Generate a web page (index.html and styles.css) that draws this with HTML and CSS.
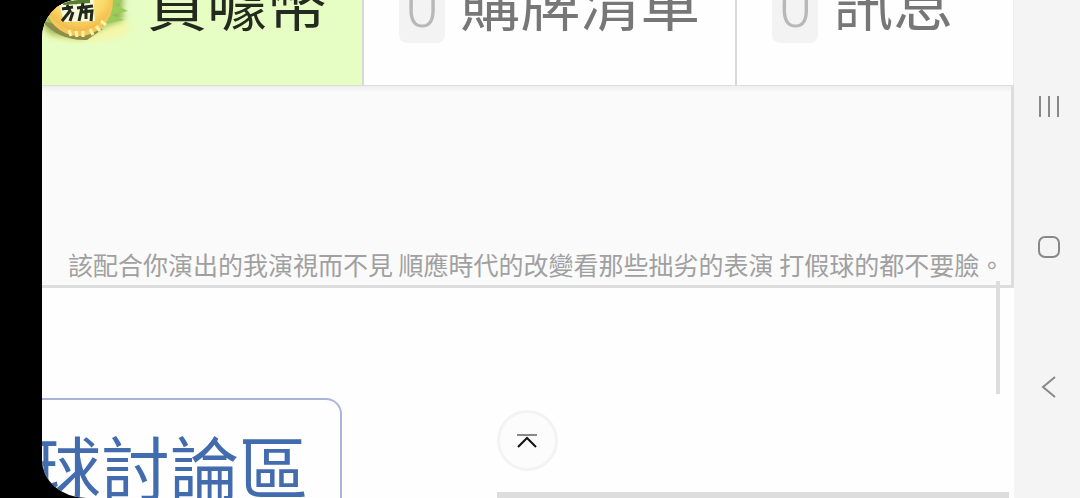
FILE: index.html
```
<!DOCTYPE html>
<html lang="zh-Hant">
<head>
    <meta charset="UTF-8">
    <meta name="viewport" content="width=device-width, initial-scale=1.0">
    <title>討論區</title>
    <link rel="stylesheet" href="styles.css">
</head>
<body>
    <div class="screen">
        <main class="page">
            <nav class="tabs">
                <a class="tab tab-active" href="#coins">
                    <svg class="coin" viewBox="0 0 96 100" aria-hidden="true">
                        <defs>
                            <filter id="soft"><feGaussianBlur stdDeviation="3"/></filter>
                            <radialGradient id="gold" cx="50%" cy="40%" r="60%">
                                <stop offset="0" stop-color="#fff3a0"/>
                                <stop offset="0.7" stop-color="#f9d968"/>
                                <stop offset="1" stop-color="#f2b94a"/>
                            </radialGradient>
                        </defs>
                        <ellipse cx="44" cy="84" rx="44" ry="15" fill="#f4f7a8" filter="url(#soft)"/>
                        <path d="M58 48L82 55L80 65L82 76L61 84L38 95L8 91L-2 78L20 58Z" fill="#93b653" filter="url(#soft)"/>
                        <path d="M63 50L84 54L74 62L86 68L70 72L82 77L62 81Z" fill="#9bcb58"/>
                        <path d="M0 78Q17 98 45 97L61 86L28 85Z" fill="#8f8d4a"/>
                        <circle cx="37" cy="59" r="34" fill="#f5c65a"/>
                        <circle cx="37" cy="55" r="33" fill="url(#gold)"/>
                        <path d="M27 87L29 93M34 88L35 94M41 88V94M48 86L51 92M54 83L58 88M59 78L64 82" stroke="#fff4a0" stroke-width="3"/>
                        <path d="M14 49H51L53 78L22 79Z" fill="#f9f8dc"/>
                        <path d="M22 52L46 55M21 60L48 58M35 46L33 61" stroke="#547d32" stroke-width="4"/>
                        <path d="M20 66L31 64M25 62L28 68L20 78M31 69L28 78M35 65L51 63M41 60L37 78M40 69L50 68L49 78M44 65V76" fill="none" stroke="#202a1b" stroke-width="3"/>
                    </svg>
                    <span class="tab-label">買噱幣</span>
                </a>
                <a class="tab" href="#list">
                    <span class="count">0</span>
                    <span class="tab-label">購牌清單</span>
                </a>
                <a class="tab tab-last" href="#messages">
                    <span class="count">0</span>
                    <span class="tab-label">訊息</span>
                </a>
            </nav>
            <section class="signature">
                <p>該配合你演出的我演視而不見 順應時代的改變看那些拙劣的表演 打假球的都不要臉。</p>
            </section>
            <div class="scroll-thumb"></div>
            <section class="links">
                <a class="forum-link" href="#forum">球討論區</a>
                <div class="top-area">
                    <button class="to-top" type="button" aria-label="回到頂端">
                        <svg width="24" height="20" viewBox="0 0 24 20" fill="none" aria-hidden="true">
                            <path d="M2 4H22" stroke="#888" stroke-width="2"/>
                            <path d="M3 16L12 7L21 16" stroke="#111" stroke-width="2"/>
                        </svg>
                    </button>
                    <div class="bottom-line"></div>
                </div>
            </section>
        </main>
        <aside class="system-bar">
            <button type="button" aria-label="最近使用">
                <svg width="24" height="24" viewBox="0 0 24 24" fill="none" stroke="#888" stroke-width="2" aria-hidden="true">
                    <path d="M3 1V22M12 1V22M21 1V22"/>
                </svg>
            </button>
            <button type="button" aria-label="主畫面">
                <svg width="24" height="24" viewBox="0 0 24 24" fill="none" stroke="#888" stroke-width="2" aria-hidden="true">
                    <rect x="2" y="2" width="20" height="20" rx="6"/>
                </svg>
            </button>
            <button type="button" aria-label="返回">
                <svg width="24" height="24" viewBox="0 0 24 24" fill="none" stroke="#888" stroke-width="2" aria-hidden="true">
                    <path d="M18 2L6 12L18 22"/>
                </svg>
            </button>
        </aside>
    </div>
</body>
</html>
```
FILE: styles.css
```
* {
    box-sizing: border-box;
    margin: 0;
    padding: 0;
}

body {
    background: #000;
    font-family: "Noto Sans CJK TC", "Noto Sans", sans-serif;
    overflow: hidden;
}

a {
    color: inherit;
    text-decoration: none;
}

button {
    border: none;
    background: none;
    cursor: pointer;
}

.screen {
    display: grid;
    grid-template-columns: minmax(0, 1fr) 66px;
    height: 100vh;
    padding-left: 42px;
}

.page {
    display: flex;
    flex-direction: column;
    position: relative;
    overflow: hidden;
    background: #fefefe;
    border-radius: 36px 0 0 44px / 38px 0 0 38px;
}

.tabs {
    display: flex;
    flex: none;
    height: 86px;
    overflow: hidden;
    border-bottom: 1px solid #ddd;
}

.tab {
    display: flex;
    flex: none;
    align-items: flex-end;
    gap: 15px;
    padding: 0 35px 42px;
    border-right: 2px solid #d8d8d8;
    color: #777;
    font-size: 60px;
    line-height: 60px;
}

.tab-active {
    padding-left: 0;
    background: #e6fdc3;
    color: #252a20;
}

.tab-last {
    flex: 1;
    border-right: 1px solid #eee;
}

.coin {
    width: 96px;
    height: 100px;
    margin-right: -6px;
}

.tab-label {
    padding-bottom: 13px;
    white-space: nowrap;
}

.count {
    padding: 0 7px 6px;
    border-radius: 8px;
    background: #f3f3f3;
    color: #b8b8b8;
    font-family: Roboto, sans-serif;
    font-size: 58px;
    font-weight: 300;
}

.signature {
    display: flex;
    flex: none;
    align-items: flex-end;
    height: 202px;
    padding: 0 8px 2px 26px;
    border-right: 3px solid #ddd;
    border-bottom: 3px solid #ddd;
    background: linear-gradient(#eee, #fafafa 6px);
    color: #a0a0a0;
    font-size: 25px;
    line-height: 38px;
    white-space: nowrap;
}

/* scroll position marker over the right edge */
.scroll-thumb {
    position: absolute;
    top: 281px;
    right: 14px;
    width: 4px;
    height: 113px;
    background: #ddd;
}

.links {
    display: flex;
    flex: 1;
    align-items: flex-start;
    justify-content: space-between;
    padding: 110px 5px 0 0;
}

.forum-link {
    width: 300px;
    padding: 25px 32px 0 0;
    border: 2px solid #aab4d8;
    border-left: none;
    border-radius: 0 16px 0 0;
    color: #426cae;
    font-size: 69px;
    line-height: 80px;
    direction: rtl;
    white-space: nowrap;
}

.top-area {
    width: 53%;
    padding-top: 12px;
}

.to-top {
    display: flex;
    align-items: center;
    justify-content: center;
    width: 61px;
    height: 61px;
    border: 3px solid #f3f3f3;
    border-radius: 50%;
    background: #fcfcfc;
}

.bottom-line {
    height: 6px;
    margin-top: 21px;
    background: #ddd;
}

.system-bar {
    display: flex;
    flex-direction: column;
    align-items: center;
    justify-content: center;
    gap: 116px;
    padding: 0 0 4px 4px;
    background: #f4f4f4;
}

.system-bar button {
    height: 24px;
}
```
